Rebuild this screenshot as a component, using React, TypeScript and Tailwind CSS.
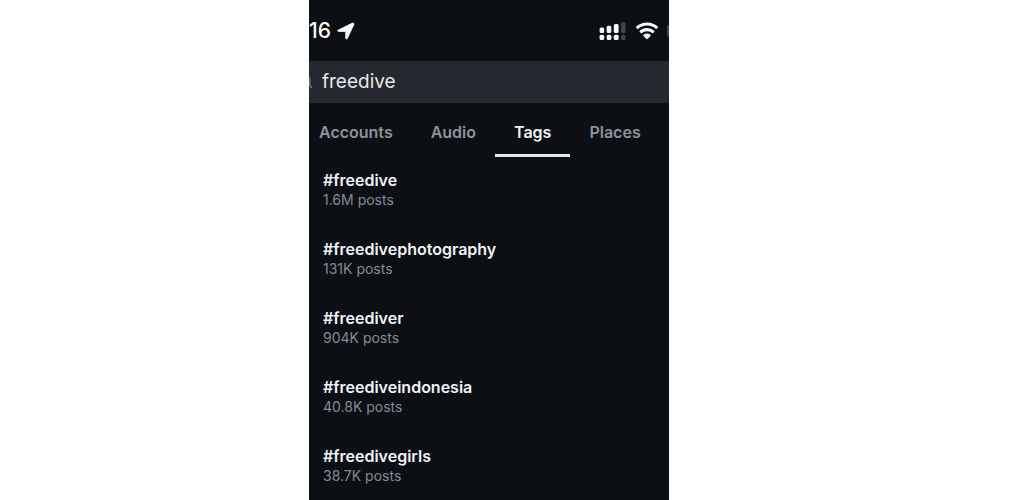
import React, { useState } from 'react';

interface Tag {
  name: string;
  posts: string;
}

const tabs = ['Accounts', 'Audio', 'Tags', 'Places'];

const tags: Tag[] = [
  { name: '#freedive', posts: '1.6M posts' },
  { name: '#freedivephotography', posts: '131K posts' },
  { name: '#freediver', posts: '904K posts' },
  { name: '#freediveindonesia', posts: '40.8K posts' },
  { name: '#freedivegirls', posts: '38.7K posts' },
];

const LocationArrow: React.FC = () => (
  <svg width="18" height="18" viewBox="0 0 18 18" fill="#f8f9fa" stroke="#f8f9fa" strokeWidth="0.8" strokeLinejoin="round" aria-hidden="true">
    <path d="M1.3 8.1 15.4 1.1c1-.5 1.9.4 1.5 1.4L10.3 16.4c-.5 1.1-1.6.9-1.6-.3V9.8c0-.3-.1-.4-.4-.4H1.8C.5 9.4.3 8.6 1.3 8.1Z" />
  </svg>
);

const SignalIcon: React.FC = () => (
  <svg width="28" height="20" viewBox="0 0 28 20" fill="#f8f9fa" aria-hidden="true">
    <rect x="0.6" y="6.5" width="4.6" height="5.5" rx="1.5" />
    <rect x="7.7" y="4.7" width="4.6" height="7.3" rx="1.5" />
    <rect x="14.8" y="3" width="4.8" height="9" rx="1.5" />
    <rect x="22" y="1.2" width="4.6" height="10.8" rx="1.5" fill="#3f4246" />
    <rect x="0.6" y="13.7" width="4.6" height="5.3" rx="1.5" />
    <rect x="7.7" y="13.7" width="4.6" height="5.3" rx="1.5" />
    <rect x="14.8" y="13.7" width="4.8" height="5.3" rx="1.5" />
    <rect x="22" y="13.7" width="4.6" height="5.3" rx="1.5" fill="#3f4246" />
  </svg>
);

const WifiIcon: React.FC = () => (
  <svg width="24" height="18" viewBox="0 0 24 18" fill="none" stroke="#f8f9fa" strokeWidth="3.1" aria-hidden="true">
    <path d="M1.7 6.1a14.8 14.8 0 0 1 20.6 0" />
    <path d="M5.3 10.3a9.7 9.7 0 0 1 13.4 0" />
    <path d="m11.2 16.8-2.7-2.7c-.5-.5-.4-1 .1-1.3a5.9 5.9 0 0 1 6.8 0c.5.3.6.8.1 1.3l-2.7 2.7c-.5.5-1.1.5-1.6 0Z" fill="#f8f9fa" stroke="none" />
  </svg>
);

const App: React.FC = () => {
  const [query, setQuery] = useState('freedive');
  const [activeTab, setActiveTab] = useState('Tags');

  return (
    <div className="grid min-h-screen grid-cols-[309fr_360fr_355fr] bg-white font-['Inter',sans-serif]">
      <main className="col-start-2 min-w-0 overflow-hidden bg-[#0c1015]">
        <header className="flex h-[61px] items-center justify-between">
          <div className="flex items-center gap-[6px]">
            <span className="text-[21px] font-medium text-[#f8f9fa]">16</span>
            <LocationArrow />
          </div>
          <div className="flex items-center gap-2">
            <SignalIcon />
            <WifiIcon />
            <span className="h-3 w-0.5 rounded-l bg-[#3f4246]" />
          </div>
        </header>

        <label className="flex h-[42px] items-center gap-[10px] bg-[#25282f]">
          <svg width="3" height="14" viewBox="0 0 3 14" fill="none" stroke="#777b83" strokeWidth="1.5" aria-hidden="true">
            <path d="M0 9.2C1.2 7.6 1.4 4 0 2.5M0 9l2.8 4" />
          </svg>
          <input
            type="text"
            aria-label="Search"
            value={query}
            onChange={(e) => setQuery(e.target.value)}
            className="min-w-0 flex-1 bg-transparent text-[19px] text-[#e6e7e9] outline-none"
          />
        </label>

        <nav className="-ml-[9px] flex h-[54px]">
          {tabs.map(tab => (
            <button
              key={tab}
              type="button"
              onClick={() => setActiveTab(tab)}
              className={`border-b-3 px-[19px] pt-[6px] text-[16px] font-semibold ${
                activeTab === tab ? 'border-[#e8e8e6] text-[#f1f2f3]' : 'border-transparent text-[#8e939c]'
              }`}
            >
              {tab}
            </button>
          ))}
        </nav>

        <ul className="px-[14px] pt-[13px]">
          {tags.map(tag => (
            <li key={tag.name} className="h-[69px]">
              <p className="text-[16px] leading-5 font-semibold text-[#f1f2f3]">{tag.name}</p>
              <p className="text-[14px] leading-5 text-[#858a94]">{tag.posts}</p>
            </li>
          ))}
        </ul>
      </main>
    </div>
  );
};

export default App;
